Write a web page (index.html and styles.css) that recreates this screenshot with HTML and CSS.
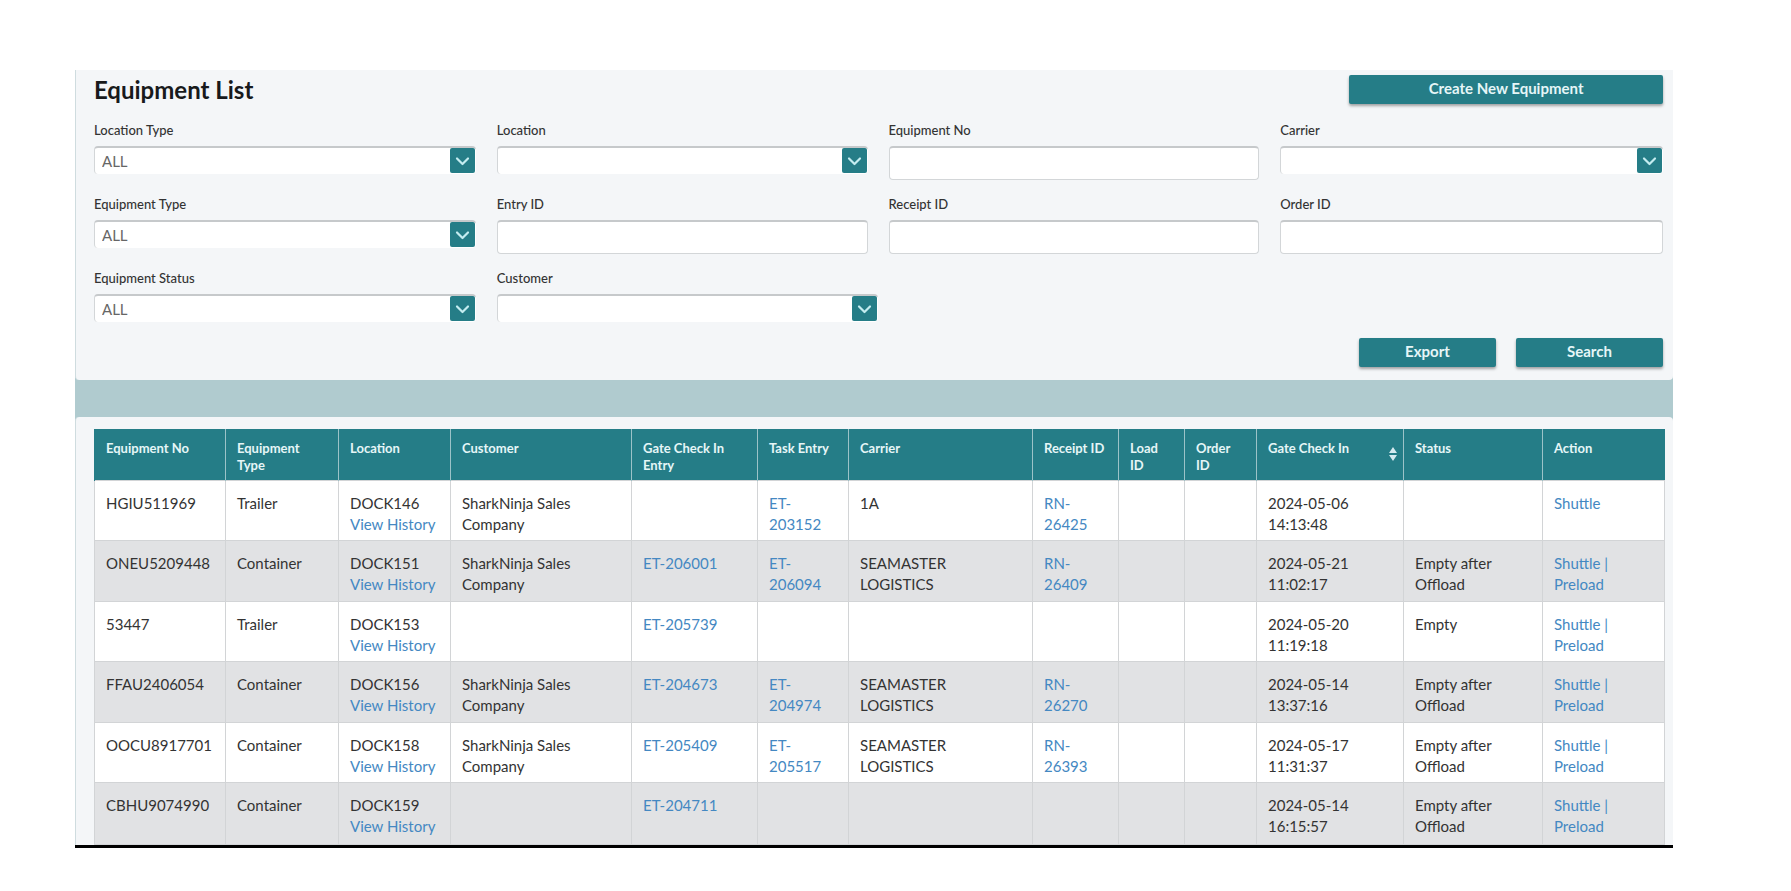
FILE: index.html
```html
<!DOCTYPE html>
<html lang="en">
<head>
<meta charset="utf-8">
<title>Equipment List</title>
<link rel="stylesheet" href="styles.css">
</head>
<body>
<svg class="symbols" aria-hidden="true">
  <symbol id="chevron" viewBox="0 0 25 25"><path d="M7 10.5l5.5 5.5L18 10.500" fill="none" stroke="#c4ecf0" stroke-width="2.2" stroke-linecap="round" stroke-linejoin="round"/></symbol>
</svg>
<main class="app">
  <section class="panel filters">
    <header class="titlebar">
      <h1 class="title">Equipment List</h1>
      <button class="btn btn-create" type="button">Create New Equipment</button>
    </header>
    <form class="form">
      <div class="field"><label for="loctype">Location Type</label><div class="pick"><select id="loctype"><option>ALL</option></select><svg class="arrow"><use href="#chevron"/></svg></div></div>
      <div class="field"><label for="location">Location</label><div class="pick"><select id="location"><option></option></select><svg class="arrow"><use href="#chevron"/></svg></div></div>
      <div class="field"><label for="eqno">Equipment No</label><input id="eqno" type="text"></div>
      <div class="field"><label for="carrier">Carrier</label><div class="pick"><select id="carrier"><option></option></select><svg class="arrow"><use href="#chevron"/></svg></div></div>
      <div class="field"><label for="eqtype">Equipment Type</label><div class="pick"><select id="eqtype"><option>ALL</option></select><svg class="arrow"><use href="#chevron"/></svg></div></div>
      <div class="field"><label for="entry">Entry ID</label><input id="entry" type="text"></div>
      <div class="field"><label for="receipt">Receipt ID</label><input id="receipt" type="text"></div>
      <div class="field"><label for="order">Order ID</label><input id="order" type="text"></div>
      <div class="field"><label for="status">Equipment Status</label><div class="pick"><select id="status"><option>ALL</option></select><svg class="arrow"><use href="#chevron"/></svg></div></div>
      <div class="field"><label for="customer">Customer</label><div class="pick pick-wide"><select id="customer"><option></option></select><svg class="arrow"><use href="#chevron"/></svg></div></div>
    </form>
    <div class="actions">
      <button class="btn btn-export" type="button">Export</button>
      <button class="btn btn-search" type="button">Search</button>
    </div>
  </section>
  <section class="panel results">
    <table class="grid">
      <colgroup>
        <col class="c-no"><col class="c-type"><col class="c-loc"><col class="c-cust"><col class="c-gate"><col class="c-task"><col class="c-carrier"><col class="c-receipt"><col class="c-load"><col class="c-order"><col class="c-time"><col class="c-status"><col class="c-action">
      </colgroup>
      <thead>
        <tr>
          <th>Equipment No</th><th>Equipment<br>Type</th><th>Location</th><th>Customer</th><th>Gate Check In<br>Entry</th><th>Task Entry</th><th>Carrier</th><th>Receipt ID</th><th>Load<br>ID</th><th>Order<br>ID</th>
          <th><div class="sortable">Gate Check In<svg class="sort" viewBox="0 0 10 16"><path d="M5 1l4 6H1zM5 15l4-6H1z" fill="#d5eaf0"/></svg></div></th>
          <th>Status</th><th>Action</th>
        </tr>
      </thead>
      <tbody>
        <tr><td>HGIU511969</td><td>Trailer</td><td>DOCK146<br><a href="#">View History</a></td><td>SharkNinja Sales Company</td><td></td><td><a href="#">ET-<br>203152</a></td><td>1A</td><td><a href="#">RN-<br>26425</a></td><td></td><td></td><td>2024-05-06<br>14:13:48</td><td></td><td><a href="#">Shuttle</a></td></tr>
        <tr><td>ONEU5209448</td><td>Container</td><td>DOCK151<br><a href="#">View History</a></td><td>SharkNinja Sales Company</td><td><a href="#">ET-206001</a></td><td><a href="#">ET-<br>206094</a></td><td>SEAMASTER<br>LOGISTICS</td><td><a href="#">RN-<br>26409</a></td><td></td><td></td><td>2024-05-21<br>11:02:17</td><td>Empty after<br>Offload</td><td><a href="#">Shuttle |</a><br><a href="#">Preload</a></td></tr>
        <tr><td>53447</td><td>Trailer</td><td>DOCK153<br><a href="#">View History</a></td><td></td><td><a href="#">ET-205739</a></td><td></td><td></td><td></td><td></td><td></td><td>2024-05-20<br>11:19:18</td><td>Empty</td><td><a href="#">Shuttle |</a><br><a href="#">Preload</a></td></tr>
        <tr><td>FFAU2406054</td><td>Container</td><td>DOCK156<br><a href="#">View History</a></td><td>SharkNinja Sales Company</td><td><a href="#">ET-204673</a></td><td><a href="#">ET-<br>204974</a></td><td>SEAMASTER<br>LOGISTICS</td><td><a href="#">RN-<br>26270</a></td><td></td><td></td><td>2024-05-14<br>13:37:16</td><td>Empty after<br>Offload</td><td><a href="#">Shuttle |</a><br><a href="#">Preload</a></td></tr>
        <tr><td>OOCU8917701</td><td>Container</td><td>DOCK158<br><a href="#">View History</a></td><td>SharkNinja Sales Company</td><td><a href="#">ET-205409</a></td><td><a href="#">ET-<br>205517</a></td><td>SEAMASTER<br>LOGISTICS</td><td><a href="#">RN-<br>26393</a></td><td></td><td></td><td>2024-05-17<br>11:31:37</td><td>Empty after<br>Offload</td><td><a href="#">Shuttle |</a><br><a href="#">Preload</a></td></tr>
        <tr><td>CBHU9074990</td><td>Container</td><td>DOCK159<br><a href="#">View History</a></td><td></td><td><a href="#">ET-204711</a></td><td></td><td></td><td></td><td></td><td></td><td>2024-05-14<br>16:15:57</td><td>Empty after<br>Offload</td><td><a href="#">Shuttle |</a><br><a href="#">Preload</a></td></tr>
      </tbody>
    </table>
  </section>
</main>
</body>
</html>
```
FILE: styles.css
```css
* { box-sizing: border-box; }
body {
  margin: 0;
  padding: 70px 118px 40px 75px;
  background: #fff;
  color: #333;
  font: 15px/21px Lato, "Open Sans", sans-serif;
}
.symbols { display: none; }
.app {
  display: flex;
  flex-direction: column;
  gap: 37px;
  background: #b0cbcf;
  border-bottom: 3px solid #000;
}
.panel {
  background: #f4f6f8;
  border-left: 1px solid #cfdcdf;
  padding: 0 10px 0 18px;
}
.filters {
  padding-top: 5px;
  padding-bottom: 13px;
  border-radius: 0 0 4px 4px;
}
.results {
  padding-top: 12px;
  border-radius: 4px 4px 0 0;
}
.titlebar {
  display: flex;
  justify-content: space-between;
  align-items: flex-start;
  margin-bottom: 17px;
}
.title {
  margin: 0;
  color: #181a1c;
  font-size: 24px;
  line-height: 29px;
  font-weight: 700;
}
.btn {
  height: 29px;
  padding: 0 0 3px;
  border: 0;
  border-radius: 2px;
  background: #257d87;
  box-shadow: 0 2px 3px rgba(0, 0, 0, .35);
  color: #e6f6f7;
  font: 700 15px/20px Lato, "Open Sans", sans-serif;
}
.btn-create { width: 20%; }
.btn-export { width: 137px; }
.btn-search { width: 147px; }
.actions {
  display: flex;
  justify-content: flex-end;
  gap: 20px;
  margin-top: 16px;
}
.form {
  display: grid;
  grid-template-columns: 382fr 371fr 371fr 383fr;
  gap: 15px 21px;
}
.field {
  display: flex;
  flex-direction: column;
  gap: 7px;
}
.field label {
  font-size: 13px;
  line-height: 18px;
  font-weight: 500;
}
.field input,
.field select {
  width: 100%;
  background: #fff;
  border: 1px solid #d3d6d8;
  border-top: 2px solid #c6c9cb;
  border-radius: 4px;
  color: #666;
  font: 15px/20px Lato, "Open Sans", sans-serif;
}
.field input { height: 34px; padding: 0 7px; }
.field select {
  appearance: none;
  grid-area: 1 / 1;
  height: 28px;
  padding: 0 32px 0 7px;
  border-right: 0;
  border-bottom: 0;
}
.pick { display: grid; }
.pick-wide { width: calc(100% + 10px); }
.arrow {
  grid-area: 1 / 1;
  justify-self: end;
  align-self: center;
  width: 25px;
  height: 25px;
  margin-right: 1px;
  border-radius: 2px;
  background: #257d87;
  pointer-events: none;
}
.grid {
  width: 100%;
  table-layout: fixed;
  border-collapse: collapse;
}
.c-no { width: 131px; }
.c-type { width: 113px; }
.c-loc { width: 112px; }
.c-cust { width: 181px; }
.c-gate { width: 126px; }
.c-task { width: 91px; }
.c-carrier { width: 184px; }
.c-receipt { width: 86px; }
.c-load { width: 66px; }
.c-order { width: 72px; }
.c-time { width: 147px; }
.c-status { width: 139px; }
.c-action { width: 122px; }
.grid th {
  height: 51px;
  padding: 11px 5px 5px 11px;
  background: #257d87;
  border-left: 1px solid #9cc3c8;
  color: #e6f6f7;
  font-size: 13px;
  line-height: 17px;
  font-weight: 700;
  text-align: left;
  vertical-align: top;
}
.grid th:first-child { border-left-color: #257d87; }
.grid td {
  height: 61px;
  padding: 12px 5px 5px 11px;
  background: #fff;
  border: 1px solid #d2d4d6;
  vertical-align: top;
}
.grid tbody tr:nth-child(odd) td { height: 60px; }
.grid tbody tr:nth-child(even) td { background: #e1e2e4; }
.grid tbody tr:last-child td { height: 62px; }
.grid a { color: #4488c2; text-decoration: none; }
.sortable { display: flex; justify-content: space-between; }
.sort { width: 10px; height: 16px; margin-top: 6px; }
```
